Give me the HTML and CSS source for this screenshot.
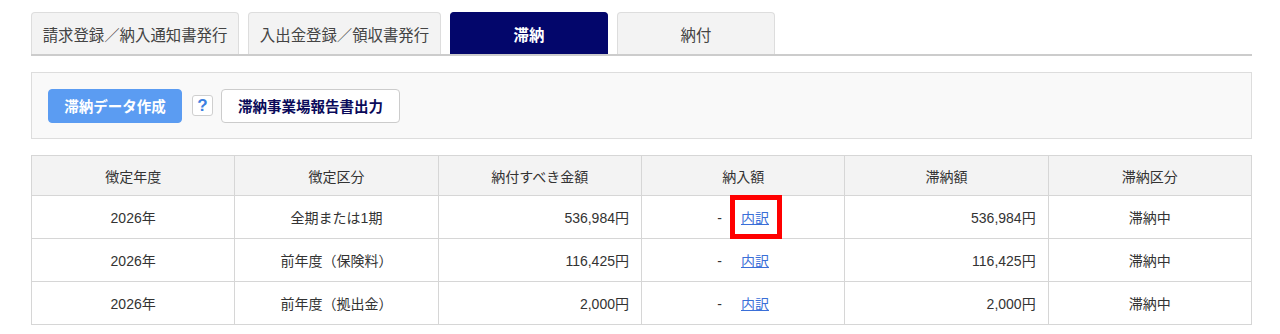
FILE: index.html
```html
<!DOCTYPE html>
<html lang="ja">
<head>
<meta charset="utf-8">
<title>滞納</title>
<link rel="stylesheet" href="styles.css">
</head>
<body>
<div class="page">
  <nav class="tabs">
    <a class="tab tab-w1">請求登録／納入通知書発行</a>
    <a class="tab tab-w2">入出金登録／領収書発行</a>
    <a class="tab tab-w3 active">滞納</a>
    <a class="tab tab-w3">納付</a>
  </nav>
  <div class="panel">
    <button class="btn btn-primary">滞納データ作成</button>
    <span class="help">?</span>
    <button class="btn btn-outline">滞納事業場報告書出力</button>
  </div>
  <table class="grid">
    <thead>
      <tr>
        <th>徴定年度</th>
        <th>徴定区分</th>
        <th>納付すべき金額</th>
        <th>納入額</th>
        <th>滞納額</th>
        <th>滞納区分</th>
      </tr>
    </thead>
    <tbody>
      <tr>
        <td>2026年</td>
        <td>全期または1期</td>
        <td class="num">536,984円</td>
        <td><span class="dash">-</span><span class="link-wrap"><a class="link">内訳</a><span class="highlight"></span></span></td>
        <td class="num">536,984円</td>
        <td>滞納中</td>
      </tr>
      <tr>
        <td>2026年</td>
        <td>前年度（保険料）</td>
        <td class="num">116,425円</td>
        <td><span class="dash">-</span><span class="link-wrap"><a class="link">内訳</a></span></td>
        <td class="num">116,425円</td>
        <td>滞納中</td>
      </tr>
      <tr>
        <td>2026年</td>
        <td>前年度（拠出金）</td>
        <td class="num">2,000円</td>
        <td><span class="dash">-</span><span class="link-wrap"><a class="link">内訳</a></span></td>
        <td class="num">2,000円</td>
        <td>滞納中</td>
      </tr>
    </tbody>
  </table>
</div>
</body>
</html>
```

FILE: styles.css
```css
* { box-sizing: border-box; }
html, body { margin: 0; padding: 0; background: #fff; }
body {
  font-family: "Liberation Sans", Arial, "Noto Sans CJK JP", sans-serif;
  color: #333;
  font-size: 14px;
}
.page {
  padding: 12px 28px 0 31px;
}
.tabs {
  display: flex;
  gap: 9px;
  border-bottom: 2px solid #cccccc;
  height: 44px;
}
.tab {
  height: 42px;
  display: flex;
  align-items: center;
  justify-content: center;
  background: #f3f3f3;
  border: 1px solid #dddddd;
  border-bottom: none;
  border-radius: 4px 4px 0 0;
  font-size: 15.4px;
  color: #444;
  cursor: pointer;
}
.tab-w1 { width: 208px; }
.tab-w2 { width: 193px; }
.tab-w3 { width: 158px; }
.tab.active {
  background: #03066b;
  border-color: #03066b;
  color: #fff;
  font-weight: bold;
}
.panel {
  margin-top: 16px;
  height: 67px;
  background: #f9f9f9;
  border: 1px solid #dddddd;
  display: flex;
  align-items: center;
  padding: 0 0 0 16px;
}
.btn {
  height: 34px;
  border-radius: 4px;
  font-family: inherit;
  font-size: 14.5px;
  font-weight: bold;
  padding: 0;
  cursor: pointer;
}
.btn-primary {
  width: 134px;
  background: #5b9cf2;
  border: 1px solid #5b9cf2;
  color: #fff;
}
.help {
  width: 21px;
  height: 21px;
  margin-left: 10px;
  margin-right: 8px;
  border: 1px solid #cfcfcf;
  border-radius: 3px;
  background: #fff;
  color: #3b7fe0;
  font-weight: bold;
  font-size: 17px;
  display: flex;
  align-items: center;
  justify-content: center;
}
.btn-outline {
  width: 179px;
  background: #fff;
  border: 1px solid #cccccc;
  color: #0a0a5a;
}
.grid {
  margin-top: 16px;
  width: 1221px;
  border-collapse: collapse;
  table-layout: fixed;
}
.grid th, .grid td {
  border: 1px solid #d6d6d6;
  text-align: center;
  font-weight: normal;
  padding: 0 12px;
}
.grid th {
  height: 40px;
  background: #f3f3f3;
}
.grid td {
  height: 43px;
}
.grid td.num { text-align: right; }
.dash { display: inline-block; margin-right: 19px; }
.link-wrap { position: relative; display: inline-block; }
.link {
  color: #3a6fd8;
  text-decoration: underline;
  cursor: pointer;
}
.highlight {
  position: absolute;
  left: -11px;
  right: -13px;
  top: -12px;
  bottom: -12px;
  border: 5px solid #ff0000;
}
```
